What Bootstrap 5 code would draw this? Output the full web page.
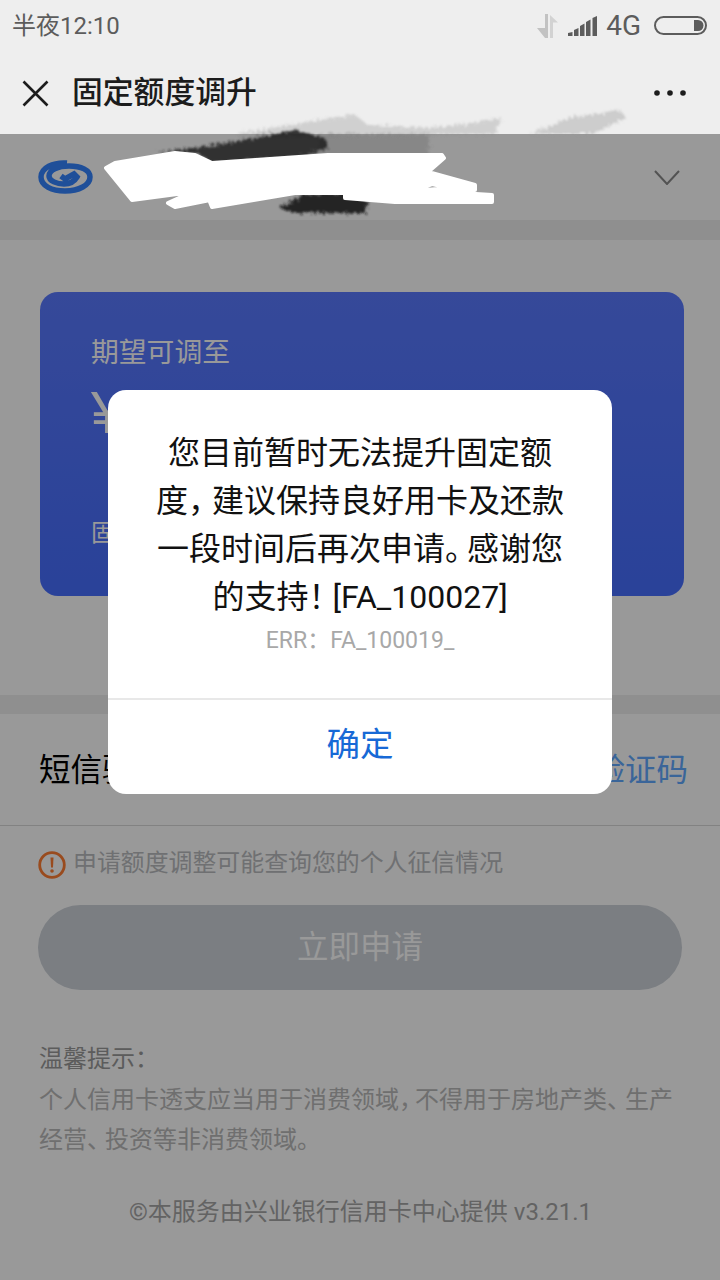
<!DOCTYPE html>
<html lang="zh-CN">
<head>
    <meta charset="UTF-8">
    <meta name="viewport" content="width=device-width, initial-scale=1.0">
    <title>固定额度调升</title>
    <link href="https://cdn.jsdelivr.net/npm/bootstrap@5.3.0/dist/css/bootstrap.min.css" rel="stylesheet">
    <style>
        body { margin: 0; background: #fff; font-family: Roboto, "Noto Sans CJK SC", sans-serif; }
        .phone { width: 720px; height: 1280px; overflow: hidden; }

        /* top bars are not dimmed */
        .top-area { background: #eee; height: 134px; }
        .status-row { height: 52px; padding: 0 13px 0 12px; color: #5c5c5c; font-size: 24px; }
        .net-label { font-size: 28px; margin: 0 12px 0 8px; }
        .tool-row { height: 82px; padding: 0 34px 0 22px; }
        .tool-title { font-size: 30.8px; font-weight: 500; color: #1c1c1c; margin-left: 23px; }

        /* page below the mask */
        .bank-row { height: 86px; padding: 0 40px 0 38px; }
        .grey-band { background: #eee; }
        .band-top { height: 20px; }
        .band-mid { height: 19px; }
        .quota-area { height: 455px; padding: 52px 36px 0 40px; }
        .quota-box { height: 304px; border-radius: 18px; padding: 46px 51px; color: #fff; background: linear-gradient(#5a7aff, #466eff); }
        .quota-label { font-size: 27.8px; line-height: 30px; }
        .quota-amount { font-size: 60px; line-height: 70px; margin-top: 10px; font-family: "Liberation Sans", sans-serif; }
        .quota-note { font-size: 24px; line-height: 30px; margin-top: 70px; }
        .sms-row { height: 112px; padding: 2px 32px 0 39px; border-bottom: 1px solid #d9d9d9; font-size: 31.5px; color: #000; }
        .sms-link { color: #62a8ff; }
        .warn-row { padding: 21px 0 0 38px; height: 79px; font-size: 23.9px; color: #b9bbbe; line-height: 32px; gap: 7px; }
        .apply-btn { margin: 0 38px; height: 85px; width: 644px; border: 0; border-radius: 43px; background: #cdd2d9; color: #fff; font-size: 31.5px; }
        .tips { padding: 51px 38px 0 39px; font-size: 24px; line-height: 40px; color: #b9b9b9; }
        .tips-head { color: #9a9a9a; line-height: 36px; margin-bottom: 3px; }
        .foot-note { margin-top: 32px; font-size: 24px; line-height: 40px; color: #a6a6a6; text-align: center; }

        /* overlay layers */
        .page-mask { top: 134px; left: 0; right: 0; bottom: 0; background: rgba(0, 0, 0, .4); }
        .scribble { top: 0; left: 0; }
        .alert-box { top: 390px; left: 108px; width: 504px; height: 404px; border: 0; border-radius: 18px; background: #fff; }
        .alert-msg { height: 308px; padding-top: 39px; text-align: center; font-size: 32px; line-height: 48px; color: #111; }
        .alert-err { font-size: 23px; line-height: 36px; margin-top: 2px; color: #a8a8a8; }
        .alert-ok { height: 96px; padding-bottom: 4px; border-top: 2px solid #e8e8e8; color: #1769d6; font-size: 33.5px; }
        .tight { letter-spacing: -8px; }
        .tight-more { letter-spacing: -10px; }
        .tight-mark { letter-spacing: -6px; }
    </style>
</head>
<body>
<div class="phone position-relative">
    <!-- status bar and title bar -->
    <div class="top-area">
        <div class="status-row d-flex align-items-center justify-content-between">
            <span>半夜12:10</span>
            <div class="d-flex align-items-center">
                <svg width="23" height="24" viewBox="0 0 23 24"><path d="M8 24L0 14h8V0h3v24z" fill="#c2c2c2"/><path d="M13 24V1l8 7.500h-5V24z" fill="#d2d2d2"/></svg>
                <svg class="ms-2" width="30" height="20" viewBox="0 0 30 20"><path d="M0 20v-3l4.500-1v4zM6 20v-6l4.500-2v8zM12 20V10l4.500-2.500V20zM18 20V6l4.500-2.500V20zM24.500 20V2L29 0v20z" fill="#5c5c5c"/></svg>
                <span class="net-label">4G</span>
                <svg width="54" height="20" viewBox="0 0 54 20"><rect x="2" y="1" width="51" height="17" rx="8.500" fill="none" stroke="#5c5c5c" stroke-width="2"/><path d="M41 4h4a5.500 5.500 0 0 1 0 11h-4z" fill="#5c5c5c"/></svg>
            </div>
        </div>
        <div class="tool-row d-flex align-items-center justify-content-between">
            <div class="d-flex align-items-center">
                <svg width="27" height="27" viewBox="0 0 27 27"><path d="M1.500 1.500l24 24M25.500 1.500l-24 24" fill="none" stroke="#1c1c1c" stroke-width="2.600"/></svg>
                <span class="tool-title">固定额度调升</span>
            </div>
            <svg width="32" height="6" viewBox="0 0 32 6"><circle cx="3" cy="3" r="2.800" fill="#1c1c1c"/><circle cx="16" cy="3" r="2.800" fill="#1c1c1c"/><circle cx="29" cy="3" r="2.800" fill="#1c1c1c"/></svg>
        </div>
    </div>

    <!-- bank selector -->
    <div class="bank-row d-flex align-items-center justify-content-between">
        <svg width="55" height="34" viewBox="0 0 55 34">
            <path d="M29 3C15 2 3 8 3 17c0 9 11 14 24 14 14 0 25-6 25-14 0-7-9-11-21-11C20 6 11 10 11 16c0 5 8 8 15 8 5 0 10-2 13-7l-3-3-9 5-4-3" fill="none" stroke="#3484ff" stroke-width="5.500"/>
        </svg>
        <svg width="26" height="15" viewBox="0 0 26 15"><path d="M1 1l12 13L25 1" fill="none" stroke="#8a8a8a" stroke-width="2"/></svg>
    </div>
    <div class="grey-band band-top"></div>

    <!-- quota card -->
    <div class="quota-area">
        <div class="quota-box">
            <div class="quota-label">期望可调至</div>
            <div class="quota-amount">¥</div>
            <div class="quota-note">固定</div>
        </div>
    </div>
    <div class="grey-band band-mid"></div>

    <!-- sms row -->
    <div class="sms-row d-flex align-items-center justify-content-between">
        <span>短信验证码</span>
        <span class="sms-link">获取验证码</span>
    </div>
    <div class="warn-row d-flex align-items-start">
        <svg class="mt-1" width="28" height="28" viewBox="0 0 28 28">
            <circle cx="14" cy="14" r="12.300" fill="none" stroke="#ff7d32" stroke-width="2.800"/>
            <path d="M12.500 6.500h3l-.5 10h-2z" fill="#ff7d32"/><circle cx="14" cy="20" r="1.800" fill="#ff7d32"/>
        </svg>
        <span>申请额度调整可能查询您的个人征信情况</span>
    </div>
    <button type="button" class="apply-btn d-block">立即申请</button>
    <div class="tips">
        <div class="tips-head">温馨提示：</div>
        <div>个人信用卡透支应当用于消费领域<span class="tight">，</span>不得用于房地产类<span class="tight-mark">、</span>生产<br>经营<span class="tight-mark">、</span>投资等非消费领域。</div>
        <div class="foot-note">©本服务由兴业银行信用卡中心提供 v3.21.1</div>
    </div>

    <div class="page-mask position-absolute"></div>

    <!-- redaction marks drawn across the screenshot -->
    <svg class="scribble position-absolute" width="720" height="240" viewBox="0 0 720 240">
        <defs>
            <filter id="smear" x="-10%" y="-30%" width="120%" height="160%">
                <feTurbulence type="fractalNoise" baseFrequency=".35" numOctaves="2" seed="4"/>
                <feDisplacementMap in="SourceGraphic" scale="9"/>
                <feGaussianBlur stdDeviation=".8"/>
            </filter>
        </defs>
        <g filter="url(#smear)">
            <path d="M238 134l70-12 47-7 13 10 60 3 34-3 40-7-8 16-256 4z" fill="#8c8c8c" opacity=".3"/>
            <path d="M530 134l40-16 50-8 6 8-34 16z" fill="#9a9a9a" opacity=".4"/>
            <path d="M320 134h110l-2 24-50 0-60-4z" fill="#666" opacity=".35"/>
            <path d="M158 153l70-10 67-13 30 8 3 10-26 9-90 6-14-10z" fill="#262626" opacity=".92"/>
            <path d="M280 208l22-13 43-2 23 9-3 11-70 0z" fill="#161616" opacity=".9"/>
        </g>
        <path fill-rule="evenodd" fill="#fff" stroke="#fff" stroke-width="4" stroke-linejoin="round"
              d="M106 168l9-5 60-10 20 2 17 8 116-8h114l2 3-16 14 47 13v5h-63l80 5v7h-97l-50-4v-5h-50l-83 14-2-5 25-7-60 12-7-4 24-11-60 8z
                 M413 191l19-7 18 4z"/>
    </svg>

    <!-- alert dialog -->
    <div class="alert-box card position-absolute">
        <div class="alert-msg">
            您目前暂时无法提升固定额<br>
            度<span class="tight">，</span>建议保持良好用卡及还款<br>
            一段时间后再次申请<span class="tight-more">。</span>感谢您<br>
            的支持<span class="tight">！</span>[FA_100027]
            <div class="alert-err">ERR：FA_100019_</div>
        </div>
        <div class="alert-ok d-flex align-items-center justify-content-center">确定</div>
    </div>
</div>
<script src="https://cdn.jsdelivr.net/npm/bootstrap@5.3.0/dist/js/bootstrap.bundle.min.js"></script>
</body>
</html>
